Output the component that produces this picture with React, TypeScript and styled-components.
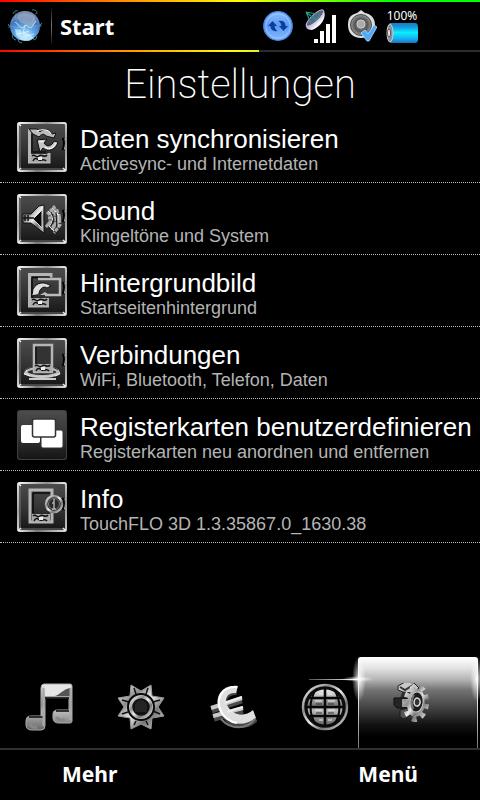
import React from "react";
import styled, { createGlobalStyle } from "styled-components";

const GlobalStyle = createGlobalStyle`
  * { box-sizing: border-box; }
  body { margin: 0; background: #000; }
  button { appearance: none; border: 0; margin: 0; padding: 0; background: none; color: inherit; font: inherit; cursor: pointer; }
  svg { display: block; flex: none; }
`;

const Screen = styled.div`
  display: flex;
  flex-direction: column;
  min-height: 100vh;
  overflow: hidden;
  background: #000;
  color: #fff;
  font-family: "Liberation Sans", Arial, sans-serif;
`;

const Defs = styled.svg`
  position: absolute;
`;

const TopLine = styled.div`
  height: 2px;
  background: linear-gradient(90deg, #f00 0%, #ff8a00 25%, #ff0 50%, #0f0 82%, #0f0 100%);
`;

const BottomLine = styled.div`
  height: 2px;
  background: linear-gradient(90deg, #f00 0%, #ff8a00 24%, #ff0 48%, #dfef2a 54%, #2c2c2c 54%);
`;

const StatusBar = styled.header`
  display: flex;
  align-items: center;
  height: 48px;
  padding: 0 62px 0 7px;
`;

const StartButton = styled.button`
  display: flex;
  align-items: center;
  gap: 8px;
  font: bold 22px/30px "Noto Sans", Tahoma, sans-serif;
`;

const Divider = styled.span`
  width: 1px;
  height: 36px;
  background: linear-gradient(#111, #777 50%, #111);
`;

const Tray = styled.div`
  display: flex;
  align-items: center;
  gap: 9px;
  margin-left: auto;
`;

const Battery = styled.div`
  display: flex;
  flex-direction: column;
  align-items: center;
  gap: 1px;
  font: 12px/12px "Noto Sans", Tahoma, sans-serif;
`;

const Title = styled.h1`
  margin: 0;
  padding: 9px 0 2px;
  font: 200 40px/48px Roboto, sans-serif;
  text-align: center;
`;

const List = styled.ul`
  flex: 1;
  margin: 0;
  padding: 0;
  list-style: none;
`;

const Item = styled.li`
  border-bottom: 1px dotted #bbb;
`;

const Row = styled.button`
  display: flex;
  align-items: flex-start;
  gap: 13px;
  width: 100%;
  padding: 11px 0 8px 17px;
  text-align: left;
`;

const RowText = styled.span`
  display: flex;
  flex-direction: column;
  padding-top: 2px;
  white-space: nowrap;
`;

const RowTitle = styled.span`
  font-size: 26px;
  line-height: 30px;
`;

const RowNote = styled.span`
  color: #b4b4b4;
  font-size: 18px;
  line-height: 20px;
`;

const Tabs = styled.nav`
  display: grid;
  grid-template-columns: repeat(5, 1fr);
  height: 92px;
  padding: 0 17px 0 3px;
`;

const Tab = styled.button`
  position: relative;
  display: flex;
  align-items: center;
  justify-content: center;
  padding-top: 9px;
`;

const TabGlow = styled.svg`
  position: absolute;
  top: 0;
  right: -17px;
`;

const TabIcon = styled.svg`
  position: relative;
`;

const SoftKeys = styled.footer`
  display: flex;
  justify-content: space-between;
  align-items: center;
  height: 52px;
  padding: 0 62px 2px;
  border-top: 2px solid #303030;
`;

const SoftKey = styled.button`
  font: bold 21px/30px "Noto Sans", Tahoma, sans-serif;
`;

const SharedPaint = () => (
  <Defs width="0" height="0" aria-hidden="true">
    <defs>
      <linearGradient id="chrome" x1="0" y1="0" x2="1" y2="1">
        <stop offset="0" stopColor="#f8f8f8" />
        <stop offset=".3" stopColor="#8d8d8d" />
        <stop offset=".5" stopColor="#ededed" />
        <stop offset=".7" stopColor="#777" />
        <stop offset="1" stopColor="#ddd" />
      </linearGradient>
      <linearGradient id="steel" x1="0" y1="0" x2="0" y2="1">
        <stop offset="0" stopColor="#eee" />
        <stop offset=".45" stopColor="#777" />
        <stop offset=".6" stopColor="#bbb" />
        <stop offset="1" stopColor="#666" />
      </linearGradient>
      <linearGradient id="plate" x1="0" y1="0" x2="0" y2="1">
        <stop offset="0" stopColor="#4c4c4c" />
        <stop offset=".5" stopColor="#353535" />
        <stop offset="1" stopColor="#151515" />
      </linearGradient>
      <radialGradient id="flare">
        <stop offset="0" stopColor="#fff" />
        <stop offset=".3" stopColor="#fff" stopOpacity=".6" />
        <stop offset="1" stopColor="#fff" stopOpacity="0" />
      </radialGradient>
    </defs>
  </Defs>
);

const GlobeIcon = () => (
  <svg width="36" height="38" viewBox="0 0 36 38" fill="none" aria-hidden="true">
    <defs>
      <radialGradient id="earth" cx=".5" cy=".85" r=".9">
        <stop offset="0" stopColor="#d6f4ff" />
        <stop offset=".35" stopColor="#62a9e8" />
        <stop offset=".65" stopColor="#4377bd" />
        <stop offset="1" stopColor="#8e9bb2" />
      </radialGradient>
    </defs>
    <circle cx="18" cy="19" r="15" fill="url(#earth)" />
    <path d="M11 8 17 6l9 2 3 6-3 5-7-1-6-3-3-4Z" fill="#a5adbd" opacity=".65" />
    <path d="m8 22 6 1 1 6 3-4 4 2 5 4-5 3-7-1-6-5Z" fill="#bbe9ff" opacity=".8" />
    <path d="m8 15 7 6 4-3 5 3 5-7M18 18l-2 8 6-2M10 27l5-1 5 3 7-2" stroke="#fff" strokeWidth="1" opacity=".6" />
    <path d="M1 18c8 4 26 4 34-1M8 5c1 12 6 23 16 28M29 6c-4 12-12 23-18 27" stroke="#8fd5e5" strokeWidth=".5" opacity=".6" />
    <g stroke="#4b9a9e" strokeWidth=".8">
      <path d="M6 7q1-4 5-3M25 3q5-1 5 4M1 17q2 1 1 4M35 16q-3 2-1 4M6 27q-2 5 3 6M11 32q0 4 4 4M26 33q4 0 4-4" />
    </g>
  </svg>
);

const SyncIcon = () => (
  <svg width="33" height="32" viewBox="0 0 33 32" aria-label="Synchronisierung" role="img">
    <defs>
      <linearGradient id="syncBlue" x1="0" y1="0" x2="0" y2="1">
        <stop offset="0" stopColor="#8abcff" /><stop offset=".5" stopColor="#5c99f4" /><stop offset="1" stopColor="#83bcff" />
      </linearGradient>
    </defs>
    <circle cx="15" cy="16" r="14.3" fill="url(#syncBlue)" stroke="#4a86e5" strokeWidth="1.2" />
    <circle cx="15" cy="16" r="12.2" fill="none" stroke="#a5ceff" strokeWidth="1" opacity=".7" />
    <path d="M5 16 9.500 11 14 16h-2.500q0 3 3 5-7 1-7-5ZM25 16l-4.500 5L16 16h2.500q0-3-3-5 7-1 7 5Z" fill="#0d3f9a" />
  </svg>
);

const SignalIcon = () => (
  <svg width="33" height="36" viewBox="0 0 33 36" aria-label="Empfang" role="img">
    <defs>
      <linearGradient id="dish" x1="0" y1="0" x2="1" y2="1">
        <stop offset="0" stopColor="#5a5480" /><stop offset=".45" stopColor="#b1a9cf" /><stop offset=".7" stopColor="#fff" /><stop offset="1" stopColor="#7770a5" />
      </linearGradient>
    </defs>
    <path d="M19 3C22 9 16 19 7 22 2 22 0 19 1 16Z" fill="url(#dish)" />
    <ellipse cx="10" cy="10" rx="11.500" ry="3.500" transform="rotate(-43 10 10)" fill="#645f84" stroke="#dcd8ef" strokeWidth=".8" />
    <path d="m1 4 11 2M1 4l5 11M1 4l10 8M11 12l4-6" stroke="#1ba18e" strokeWidth="1.200" fill="none" />
    <path d="M9 31h4v4H9zM15 23h4v12h-4zM21 16h4v19h-4zM27 7h4v28h-4z" fill="#fff" />
  </svg>
);

const SpeakerIcon = () => (
  <svg width="30" height="34" viewBox="0 0 30 34" aria-label="Ton an" role="img">
    <defs>
      <radialGradient id="cone">
        <stop offset="0" stopColor="#eee" /><stop offset=".35" stopColor="#777" /><stop offset=".6" stopColor="#555" /><stop offset="1" stopColor="#999" />
      </radialGradient>
    </defs>
    <path d="M10 4 14 1l4 3c6 1 10 5 10 12s-6 13-14 13S1 24 1 16 4 6 10 4Z" fill="#ddd" />
    <circle cx="14" cy="16" r="10.500" fill="url(#cone)" stroke="#444" />
    <circle cx="14" cy="15" r="4" fill="#aaa" stroke="#ccc" />
    <path d="m14 24 4-3 3 4 6-9 3 2-8 14h-2Z" fill="#4babff" stroke="#baddff" strokeWidth=".8" />
  </svg>
);

const BatteryIcon = () => (
  <svg width="32" height="20" viewBox="0 0 32 20" aria-hidden="true">
    <defs>
      <linearGradient id="cell" x1="0" y1="0" x2="0" y2="1">
        <stop offset="0" stopColor="#177dc0" /><stop offset=".2" stopColor="#1696df" /><stop offset=".48" stopColor="#0aefff" /><stop offset=".8" stopColor="#18aaf2" /><stop offset="1" stopColor="#1874b8" />
      </linearGradient>
    </defs>
    <path d="M4 0h25q3 0 3 4v12q0 4-3 4H4Z" fill="url(#cell)" />
    <ellipse cx="4" cy="10" rx="3" ry="9" fill="#8c8c9c" stroke="#ccc" />
    <ellipse cx="3" cy="10" rx="1.500" ry="4" fill="#eee" stroke="#555" />
  </svg>
);

const Tile = ({ children }: { children: React.ReactNode }) => (
  <svg width="50" height="50" viewBox="0 0 50 50" fill="none" aria-hidden="true">
    <rect x="1" y="1" width="48" height="48" rx="2" fill="url(#plate)" stroke="url(#chrome)" strokeWidth="2" />
    <path d="M3 3v44M4 47h42" stroke="#777" />
    <path d="M1 2v46" stroke="#bbb" />
    <path d="M49 2v46" stroke="#aaa" />
    <path d="M47 17v10M1 1l3 3M46 46l3 3M1 49l3-3" stroke="#eee" strokeWidth="1.500" />
    <path d="M45.500 16c2 2 2 8 0 12" stroke="#000" strokeWidth="2" />
    {children}
  </svg>
);

const Keys = ({ x, y }: { x: number; y: number }) => (
  <g transform={`translate(${x} ${y})`}>
    <path d="M0 0h18v8H0Z" fill="#aaa" />
    <path d="M1 2c3-3 4 3 7 0s5 3 8-1M2 7c2-4 4-2 6-1s5-2 7 1" stroke="#111" strokeWidth="1.500" />
    <path d="M7 3h4v3H7Z" fill="#eee" />
  </g>
);

const SyncTile = () => (
  <Tile>
    <path d="M12.500 7v33H32v-9" stroke="#b5b5b5" strokeWidth="3" />
    <path d="M15 12v18h14" stroke="#111" strokeWidth="1.500" />
    <Keys x={14} y={32} />
    <path d="M12 7h8l3 3c4-4 10-3 12 2l4-1-2 5-8-2c-2-3-5-2-7 1l-6-3Z" fill="#bbb" stroke="#111" />
    <path d="m20 18 10-1-3 4c3 5 8 3 10-2l4 1c-2 7-9 11-15 6l-3 4Z" fill="#c5c5c5" stroke="#0b0b0b" />
    <path d="m22 19 5 1M28 25c5 4 9 0 11-4M20 9c5-2 12-2 14 3" stroke="#fff" />
  </Tile>
);

const SoundTile = () => (
  <Tile>
    <path d="m22 12 5-1v28L14 29H6V20h8Z" fill="url(#chrome)" stroke="#111" />
    <path d="m25 16-9 9 9 9Z" fill="#080808" stroke="#ddd" />
    <path d="M8 21v6M11 21v6M6 24h11" stroke="#111" strokeWidth="1.500" />
    <path d="m30 18 4 4-1 6-4 5M33 15l5 5 1 8-4 8M36 12l6 8 1 11-6 8M31 24h13M30 30l11 4M33 19l9-3" stroke="#aaa" strokeWidth="3" strokeDasharray="4 1" />
    <path d="m31 17 5 6-2 8M35 14l6 7v12M38 17l4 4M32 32l5 5" stroke="#eee" strokeWidth="1" />
    <path d="m34 18 3 7-3 7M39 18l1 16" stroke="#161616" />
  </Tile>
);

const WallpaperTile = () => (
  <Tile>
    <path d="M12.500 8v32H32M11 8.500h23v3" stroke="#b5b5b5" strokeWidth="3" />
    <path d="M15 12v26M15 11.500h18" stroke="#080808" strokeWidth="1.500" />
    <path d="M21 13h22v16H28" stroke="#bbb" strokeWidth="2.500" />
    <path d="M16 23c4-7 11-8 18-3l-4 2c-4-3-8 2-8 6l-7 2Z" fill="#ddd" stroke="#111" />
    <path d="m15 28 8 1 5-3 4 3H16" fill="#bbb" />
    <Keys x={14} y={32} />
  </Tile>
);

const LinkTile = () => (
  <Tile>
    <ellipse cx="25" cy="34" rx="16" ry="4.500" stroke="#bbb" strokeWidth="3" />
    <ellipse cx="25" cy="34" rx="17" ry="6" stroke="#333" />
    <path d="M17 7h18v27H17Z" fill="#333" stroke="#b5b5b5" strokeWidth="2.500" />
    <path d="M19 9v18h14" stroke="#111" strokeWidth="1.500" />
    <Keys x={17} y={26} />
    <path d="M8 35c5 4 13 4 17 4s13-1 17-4M12 41h27" stroke="#ccc" strokeWidth="2" />
    <path d="m10 32-3 4 6 2M41 32l2 4-5 2" stroke="#eee" />
  </Tile>
);

const CardsTile = () => (
  <svg width="50" height="50" viewBox="0 0 50 50" aria-hidden="true">
    <rect width="50" height="50" rx="3" fill="#3f3f3f" />
    <rect x="1" y="1" width="48" height="48" rx="3" fill="url(#plate)" />
    <rect x="4" y="15" width="19" height="18" rx="2" fill="#fff" />
    <rect x="24" y="20" width="22" height="18" rx="2" fill="#fff" stroke="#333" />
    <rect x="15.500" y="9" width="23" height="18" rx="2" fill="#fff" stroke="#333" strokeWidth="1.500" />
  </svg>
);

const InfoTile = () => (
  <Tile>
    <path d="M13 8h22v32H13Z" stroke="#b5b5b5" strokeWidth="3" />
    <path d="M16 11v20M16 11h17" stroke="#080808" strokeWidth="1.500" />
    <Keys x={15} y={32} />
    <circle cx="37" cy="22" r="8" fill="#292929" stroke="url(#chrome)" strokeWidth="2.500" />
    <circle cx="37" cy="22" r="5.500" stroke="#777" />
    <path d="M37 17v10M35 21h2M35 27h4" stroke="#aaa" strokeWidth="1.500" />
  </Tile>
);

const MusicIcon = () => (
  <TabIcon width="48" height="48" viewBox="0 0 48 48" fill="none" aria-hidden="true">
    <path d="M19 1h26q2 0 2 2v35q0 2-2 2H34q-6 0-6-5v-4q0-4 5-4h11V15H20v28q0 4-4 4H7q-6 0-6-5v-4q0-5 5-5h10V5q0-4 3-4Z" fill="url(#steel)" stroke="#aaa" />
    <path d="M20 3h25v10H20Z" fill="#e6e6e6" />
    <path d="M30 13c6-2 7-6 15-8v8Z" fill="#555" />
    <path d="M4 34h14M31 28h13M20 15h24" stroke="#070707" strokeWidth="1.500" />
    <path d="M18.500 5v38M45.500 5v32" stroke="#aaa" strokeWidth="2" />
    <path d="M5 40q0 5 7 4M32 34q1 4 8 3" stroke="#888" strokeWidth="3" />
  </TabIcon>
);

const SunIcon = () => (
  <TabIcon width="48" height="48" viewBox="0 0 48 48" fill="none" aria-hidden="true">
    <path d="m14 2 10 6 10-6 1 11 12 2-6 9 6 9-12 2-1 11-10-5-10 5-1-11-12-2 6-9-6-9 12-2Z" fill="url(#chrome)" stroke="#999" />
    <path d="m17 5 2 6M31 5l-2 6M5 17l7 2M43 17l-7 2M5 31l6-2M43 31l-7-3M17 42l2-4M31 42l-2-4" stroke="#111" strokeWidth="1.500" />
    <circle cx="24" cy="24" r="13" fill="#bbb" stroke="#080808" strokeWidth="2" />
    <circle cx="24" cy="24" r="10" fill="#111" stroke="url(#chrome)" strokeWidth="2.500" />
    <path d="M18 21c4-6 9-5 12 1v7H18Z" fill="#242424" />
  </TabIcon>
);

const EuroIcon = () => (
  <TabIcon width="48" height="48" viewBox="0 0 48 48" fill="none" aria-hidden="true">
    <path d="M28 8C16 7 10 18 15 29c6 12 21 16 31 6" stroke="#454545" strokeWidth="8" />
    <path d="m3 28 30-10M5 36l29-8" stroke="#4a4a4a" strokeWidth="5" />
    <path d="m2 25 31-10M4 33l30-8" stroke="#c9c9c9" strokeWidth="4" />
    <path d="M29 3C13 1 5 14 10 27c5 13 23 19 37 8l-3-8c-9 8-21 5-26-5-3-7 1-13 9-12Z" fill="#dedede" />
    <path d="M28 4C14 3 7 14 11 26c3 8 10 13 17 14" stroke="#fff" strokeWidth="2" />
    <path d="M12 36c10 11 25 11 34 0" stroke="#777" strokeWidth="2" />
    <path d="m16 20 17-6M18 29l16-5" stroke="#eee" strokeWidth="2" />
  </TabIcon>
);

const WebIcon = () => (
  <TabIcon width="48" height="48" viewBox="0 0 48 48" fill="none" aria-hidden="true">
    <circle cx="24" cy="24" r="22" fill="#0b0b0b" stroke="url(#chrome)" strokeWidth="2.500" />
    <circle cx="24" cy="24" r="17.500" fill="url(#steel)" />
    <path d="M24 5v38M5 24h38M8 15h32M8 33h32" stroke="#080808" strokeWidth="2.500" />
    <path d="M15 6c-7 12-7 25 0 36M33 6c7 12 7 25 0 36" stroke="#080808" strokeWidth="2" />
    <path d="M14 18h7M27 18h7M14 27h7M27 27h7M18 11h4M27 11h4M18 37h4M27 37h4" stroke="#eee" />
    <path d="M15 21h6M27 21h6M15 30h6M27 30h6" stroke="#333" />
  </TabIcon>
);

const GearIcon = () => (
  <TabIcon width="48" height="48" viewBox="0 0 48 48" fill="none" aria-hidden="true">
    <ellipse cx="18" cy="19" rx="10" ry="15" fill="#2a2a2a" stroke="#333" strokeWidth="2" />
    <path d="m5 3 7-4 9 1 5 5-7 5-9-1-5-2Z" fill="#c9c9c9" stroke="#222" />
    <path d="m7 4 5 3 8-5" stroke="#333" strokeWidth="2" />
    <path d="M1 15h12l3 3v7H4l-3-3Z" fill="#242424" stroke="#0c0c0c" />
    <path d="M9 16h6v8H9Z" fill="#999" />
    <path d="m7 27 8-2 3 7-7 4-4-2Z" fill="#555" stroke="#1a1a1a" />
    <g transform="rotate(6 23 20)">
      <ellipse cx="23" cy="20" rx="10" ry="16" pathLength="18" strokeDasharray="1 1" stroke="url(#chrome)" strokeWidth="6" />
      <ellipse cx="23" cy="20" rx="9" ry="14" fill="url(#chrome)" />
      <ellipse cx="23.500" cy="19" rx="6.500" ry="10" fill="#1c1c1c" stroke="#ccc" />
      <path d="M20 12c-2 5-2 10 1 14" stroke="#777" strokeWidth="2" />
      <ellipse cx="24" cy="19" rx="3" ry="4" fill="#333" stroke="#ddd" strokeWidth="1.500" />
    </g>
  </TabIcon>
);

/* Glass pane behind the selected tab, with a flare at each edge. */
const ActiveGlow = () => (
  <TabGlow width="172" height="92" viewBox="0 0 172 92" fill="none" aria-hidden="true">
    <defs>
      <linearGradient id="glass" x1="0" y1="0" x2="0" y2="1">
        <stop offset="0" stopColor="#fff" /><stop offset=".12" stopColor="#e4e4e4" /><stop offset=".25" stopColor="#b3b3b3" /><stop offset=".36" stopColor="#747474" /><stop offset=".52" stopColor="#4c4c4c" /><stop offset=".75" stopColor="#111" /><stop offset=".88" stopColor="#000" />
      </linearGradient>
      <linearGradient id="edge" x1="0" y1="0" x2="0" y2="1">
        <stop offset="0" stopColor="#fff" /><stop offset=".5" stopColor="#ddd" /><stop offset="1" stopColor="#777" />
      </linearGradient>
      <linearGradient id="streak">
        <stop offset="0" stopColor="#555" /><stop offset="1" stopColor="#fff" />
      </linearGradient>
    </defs>
    <path d="M50 92V4q0-3 3-3h114q3 0 3 3v88Z" fill="url(#glass)" />
    <rect x="50" y="4" width="1" height="88" fill="url(#edge)" />
    <rect x="169" y="4" width="1" height="88" fill="url(#edge)" />
    <rect x="1" y="23" width="50" height="1" fill="url(#streak)" />
    <ellipse cx="50" cy="23" rx="16" ry="3" fill="url(#flare)" />
    <ellipse cx="51" cy="23" rx="7" ry="23" fill="url(#flare)" />
    <ellipse cx="169" cy="23" rx="7" ry="23" fill="url(#flare)" />
  </TabGlow>
);

const settings = [
  { title: "Daten synchronisieren", note: "Activesync- und Internetdaten", Icon: SyncTile },
  { title: "Sound", note: "Klingeltöne und System", Icon: SoundTile },
  { title: "Hintergrundbild", note: "Startseitenhintergrund", Icon: WallpaperTile },
  { title: "Verbindungen", note: "WiFi, Bluetooth, Telefon, Daten", Icon: LinkTile },
  { title: "Registerkarten benutzerdefinieren", note: "Registerkarten neu anordnen und entfernen", Icon: CardsTile },
  { title: "Info", note: "TouchFLO 3D 1.3.35867.0_1630.38", Icon: InfoTile },
];

const tabs = [
  { label: "Musik", Icon: MusicIcon },
  { label: "Wetter", Icon: SunIcon },
  { label: "Börse", Icon: EuroIcon },
  { label: "Internet", Icon: WebIcon },
  { label: "Einstellungen", Icon: GearIcon, active: true },
];

export default function App() {
  return (
    <Screen>
      <GlobalStyle />
      <SharedPaint />
      <TopLine />
      <StatusBar>
        <StartButton>
          <GlobeIcon />
          <Divider />
          Start
        </StartButton>
        <Tray>
          <SyncIcon />
          <SignalIcon />
          <SpeakerIcon />
          <Battery>
            <span>100%</span>
            <BatteryIcon />
          </Battery>
        </Tray>
      </StatusBar>
      <BottomLine />
      <Title>Einstellungen</Title>
      <List>
        {settings.map(({ title, note, Icon }) => (
          <Item key={title}>
            <Row>
              <Icon />
              <RowText>
                <RowTitle>{title}</RowTitle>
                <RowNote>{note}</RowNote>
              </RowText>
            </Row>
          </Item>
        ))}
      </List>
      <Tabs>
        {tabs.map(({ label, Icon, active }) => (
          <Tab key={label} aria-label={label} aria-current={active ? "page" : undefined}>
            {active && <ActiveGlow />}
            <Icon />
          </Tab>
        ))}
      </Tabs>
      <SoftKeys>
        <SoftKey>Mehr</SoftKey>
        <SoftKey>Menü</SoftKey>
      </SoftKeys>
    </Screen>
  );
}
